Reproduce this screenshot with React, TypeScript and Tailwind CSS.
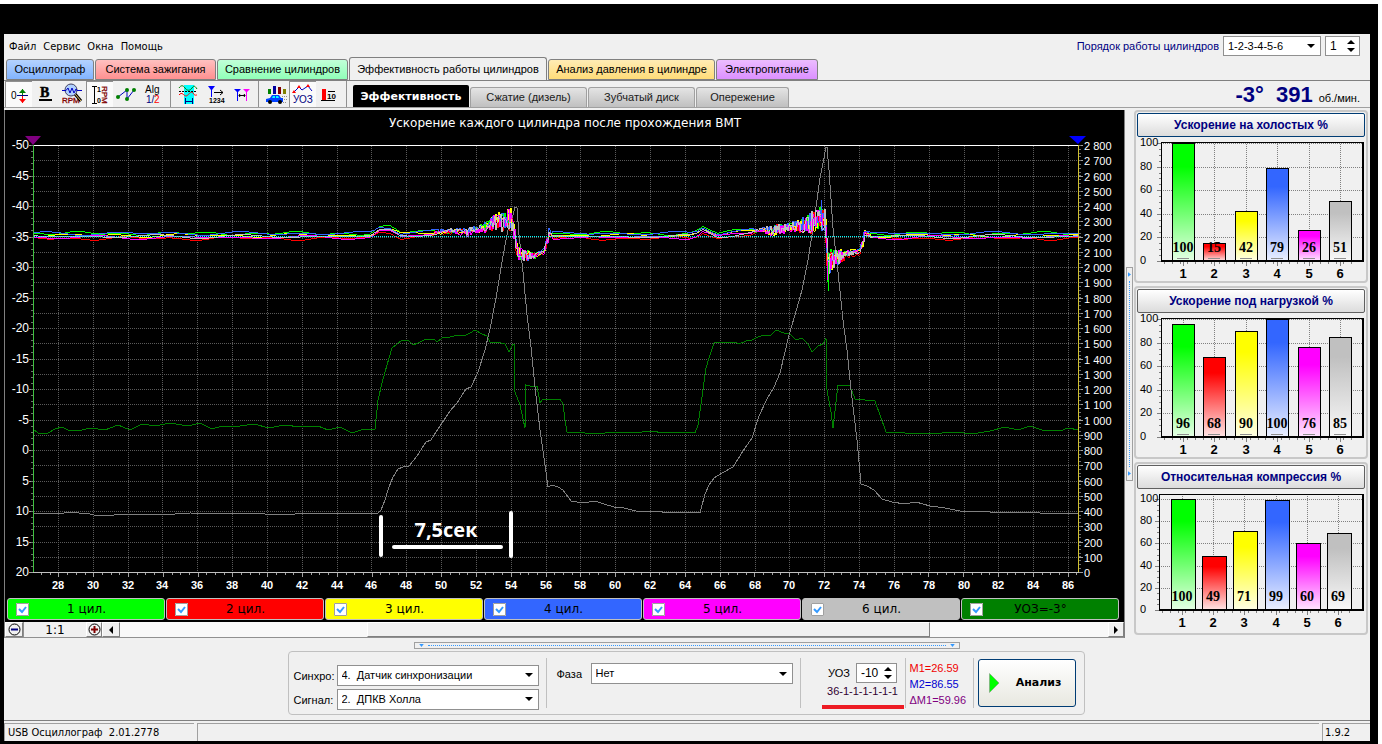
import React from "react";

type Point = [number, number];

// Plot rectangle of the main chart, in the units of its viewBox
const PLOT = { left: 33, right: 1079, top: 145, bottom: 572 };

const CYLINDERS = [
  { name: "1 цил.", color: "#00ff00" },
  { name: "2 цил.", color: "#ff0000" },
  { name: "3 цил.", color: "#ffff00" },
  { name: "4 цил.", color: "#3366ff" },
  { name: "5 цил.", color: "#ff00ff" },
  { name: "6 цил.", color: "#c0c0c0" },
];

const RPM_POINTS: Point[] = [
  [33, 513], [60, 514], [68, 512], [90, 514], [98, 516], [130, 514], [160, 515], [190, 513], [225, 514],
  [250, 513], [280, 515], [310, 513], [340, 514], [360, 513], [378, 513], [381, 510], [385, 500], [389, 487],
  [393, 477], [398, 469], [403, 467], [409, 466], [417, 456], [426, 442], [431, 440], [436, 432], [450, 411],
  [457, 403], [466, 389], [471, 387], [478, 372], [485, 350], [490, 329], [496, 298], [501, 268], [505, 245],
  [509, 225], [513, 215], [515, 207], [517, 208], [519, 235], [523, 272], [527, 315], [531, 347], [535, 387],
  [540, 430], [545, 465], [548, 487], [552, 485], [558, 487], [563, 490], [571, 501], [583, 503], [595, 501],
  [604, 504], [614, 507], [624, 508], [640, 512], [655, 511], [670, 513], [685, 512], [700, 513], [705, 494],
  [709, 485], [714, 478], [722, 473], [733, 467], [743, 451], [752, 438], [759, 416], [767, 399], [774, 387],
  [780, 373], [789, 335], [797, 308], [802, 290], [808, 260], [812, 235], [817, 200], [820, 178], [824, 158],
  [826, 147], [827, 147], [829, 170], [833, 228], [838, 272], [843, 320], [847, 350], [851, 390], [857, 440],
  [861, 484], [867, 486], [874, 490], [882, 499], [892, 502], [905, 504], [916, 502], [930, 506], [945, 508],
  [960, 511], [980, 511], [1000, 513], [1030, 512], [1050, 514], [1079, 513],
];

const ANGLE_POINTS: Point[] = [
  [33, 429], [38, 433], [48, 433], [55, 429], [62, 427], [70, 431], [82, 430], [90, 428], [105, 430], [118, 425],
  [130, 430], [142, 424], [155, 426], [170, 423], [188, 426], [200, 423], [212, 429], [222, 426], [240, 426],
  [255, 424], [268, 428], [285, 425], [300, 427], [318, 426], [328, 430], [340, 427], [352, 433], [364, 429],
  [375, 429], [378, 400], [382, 383], [387, 365], [392, 348], [402, 340], [408, 340], [413, 345], [418, 343],
  [424, 340], [434, 339], [437, 342], [442, 338], [450, 337], [458, 335], [464, 336], [470, 333], [475, 330],
  [482, 334], [487, 336], [490, 342], [497, 342], [505, 344], [509, 352], [513, 344], [514, 344], [515, 392],
  [520, 405], [525, 428], [526, 385], [534, 387], [537, 386], [540, 403], [543, 399], [560, 399], [563, 404],
  [565, 420], [567, 432], [585, 433], [605, 433], [620, 432], [635, 433], [650, 431], [665, 433], [680, 432],
  [695, 433], [698, 425], [702, 397], [706, 368], [710, 355], [714, 343], [722, 342], [735, 342], [739, 344],
  [746, 341], [752, 340], [758, 337], [764, 335], [770, 336], [776, 330], [784, 333], [790, 334], [796, 340],
  [802, 338], [808, 344], [812, 352], [818, 346], [823, 344], [826, 338], [827, 390], [831, 412], [833, 428],
  [838, 385], [850, 386], [855, 399], [875, 401], [880, 415], [886, 432], [905, 433], [930, 434], [955, 432],
  [972, 434], [990, 431], [1005, 427], [1018, 430], [1030, 426], [1042, 430], [1060, 431], [1068, 428], [1079, 430],
];

// [x, level, spread] of the cylinder bundle
const BUNDLE: [number, number, number][] = [
  [33, 235, 1], [370, 235, 1], [374, 233, 1], [380, 229, 1], [390, 229, 1], [400, 234, 1], [420, 233, 1],
  [450, 231, 2], [464, 231, 3], [467, 234, 4], [470, 231, 3], [485, 228, 4], [492, 222, 7], [500, 221, 9],
  [511, 219, 10], [515, 235, 9], [518, 254, 9], [524, 256, 6], [536, 255, 3], [544, 251, 1], [547, 242, 5],
  [549, 233, 3], [553, 235, 1], [690, 235, 1], [697, 233, 1], [703, 229, 1], [718, 235, 1], [740, 232, 1],
  [765, 229, 2], [772, 231, 5], [790, 227, 4], [805, 225, 8], [812, 221, 11], [825, 219, 12], [826, 228, 16],
  [828, 268, 18], [830, 262, 11], [838, 257, 8], [845, 254, 4], [860, 251, 1], [863, 242, 6], [865, 232, 4],
  [868, 235, 2], [872, 235, 1], [1079, 235, 1],
];

const noise = (x: number, seed: number) => {
  const v = Math.sin(x * 12.9898 + seed * 78.233) * 43758.5453;
  return (v - Math.floor(v)) * 2 - 1;
};

const traceFor = (index: number) => {
  const shift = [-2, 3, 0, -2, 2, 1][index];
  const points: Point[] = [];
  for (let x = PLOT.left; x <= PLOT.right; x += 1) {
    const at = Math.max(1, BUNDLE.findIndex((p) => p[0] >= x));
    const a = BUNDLE[at - 1];
    const b = BUNDLE[at];
    const k = (x - a[0]) / (b[0] - a[0]);
    const spread = a[2] + (b[2] - a[2]) * k;
    const level = a[1] + (b[1] - a[1]) * k;
    const calm = spread < 1.5;
    const drift = Math.sin(x / (7 + index) + index * 2) + Math.sin(x / 17 + index * 3);
    points.push([x, Math.round(level + drift + (calm ? shift : shift / 3 + noise(x, index + 1) * spread))]);
  }
  return points;
};

const toPath = (points: Point[]) => points.map((p) => p.join(",")).join(" ");

const range = (n: number) => Array.from({ length: n }, (_, i) => i);

const thousands = (n: number) => (n >= 1000 ? `${Math.floor(n / 1000)} ${String(n % 1000).padStart(3, "0")}` : String(n));

const MainChart: React.FC = () => {
  const rowY = (i: number) => Math.round(PLOT.top + (i * (PLOT.bottom - PLOT.top)) / 28);
  const colX = (i: number) => Math.round(58 + i * 34.83);
  return (
    <svg viewBox="5 110 1119 487" className="block h-auto w-full" role="img" aria-label="Ускорение каждого цилиндра">
      <text x="565" y="127" textAnchor="middle" fill="#fff" className="font-['DejaVu_Sans'] text-[12px]">
        Ускорение каждого цилиндра после прохождения ВМТ
      </text>
      <g shapeRendering="crispEdges" fill="none">
        {range(27).map((i) => (
          <path key={i} d={`M34 ${rowY(i + 1)}.5H1078`} stroke="#5a5a5a" strokeDasharray="1 1" />
        ))}
        {range(30).map((i) => (
          <path key={i} d={`M${colX(i)}.5 146V572`} stroke="#5a5a5a" strokeDasharray="1 1" />
        ))}
        {range(15).map((i) => (
          <path key={i} d={`M29 ${rowY(i * 2)}.5h4`} stroke="#a0a0a0" />
        ))}
        {range(70).map((i) => (
          <path key={i} d={`M31 ${Math.round(145 + i * 6.1)}.5h2`} stroke="#707070" />
        ))}
        {range(29).map((i) => (
          <path key={i} d={`M1079 ${rowY(i)}.5h4`} stroke="#a0a0a0" />
        ))}
        {range(112).map((i) => (
          <path key={i} d={`M1079 ${Math.round(145 + i * 3.81)}.5h2`} stroke="#707070" />
        ))}
        {range(120).map((i) => (
          <path key={i} d={`M${Math.round(41 + i * 8.7)}.5 573v${i % 4 === 2 ? 4 : 2}`} stroke="#a0a0a0" />
        ))}
        <path d="M33 145.5H1079" stroke="#fff" />
        <path d="M33 572.5H1079" stroke="#c0c0c0" />
        <polyline points={toPath(ANGLE_POINTS)} stroke="#008000" />
        <polyline points={toPath(RPM_POINTS)} stroke="#808080" />
        {CYLINDERS.map((c, i) => (
          <polyline key={c.name} points={toPath(traceFor(i))} stroke={c.color} />
        ))}
        <path d="M821.5 200V222" stroke="#3366ff" />
        <path d="M828.5 262V291" stroke="#00ff00" />
        <path d="M34 236.5H1079" stroke="#00ffff" strokeDasharray="1 1" />
        <path d="M33.5 145V572" stroke="#40c040" />
        <path d="M1078.5 145V572" stroke="#d0c030" />
      </g>
      <path d="M25 136H41L33 145Z" fill="#800080" />
      <path d="M1069 136H1086L1078 144Z" fill="#0000ff" />
      <g fill="#fff" className="font-['Liberation_Sans'] text-[12px]">
        {range(15).map((i) => (
          <text key={i} x="29" y={rowY(i * 2) + 4} textAnchor="end">{i * 5 - 50}</text>
        ))}
      </g>
      <g fill="#fff" className="font-['Liberation_Sans'] text-[11px]">
        {range(29).map((i) => (
          <text key={i} x="1084" y={rowY(i) + 5}>{thousands(2800 - i * 100)}</text>
        ))}
      </g>
      <g fill="#fff" textAnchor="middle" className="font-['Liberation_Sans'] text-[11px] font-bold">
        {range(30).map((i) => (
          <text key={i} x={colX(i)} y="589">{28 + i * 2}</text>
        ))}
      </g>
      <g stroke="#fff" strokeLinecap="round" strokeWidth="4">
        <path d="M381 517V555" />
        <path d="M511 513V556" />
        <path d="M394 547H501" />
      </g>
      <text x="446" y="537" textAnchor="middle" fill="#fff" className="font-['Open_Sans'] text-[20px] font-bold">7,5сек</text>
    </svg>
  );
};

type BarChartProps = {
  title: string;
  values: number[];
  headroom?: boolean;
  focused?: boolean;
};

const BarChart: React.FC<BarChartProps> = ({ title, values, headroom, focused }) => {
  const left = headroom ? 23 : 25;
  const top = 5;
  const bottom = headroom ? 121 : 124;
  const zeroToFull = headroom ? 111 : 118;
  const barWidth = headroom ? 25 : 23;
  const pitch = headroom ? 31.2 : 31.4;
  const y = (v: number) => Math.round(bottom - (v * zeroToFull) / 100);
  const centre = (i: number) => Math.round((headroom ? 46 : 47) + i * pitch);
  return (
    <section className="rounded-[4px] border-2 border-[#c8c8c8] pt-px">
      <button
        className={`mx-px flex h-6 w-[calc(100%-2px)] items-center justify-center rounded-[2px] border bg-linear-to-b from-white to-[#dcdcdc] text-xs font-bold text-[#000080] ${
          focused ? "border-[#003c74]" : "border-[#606060]"
        }`}
      >
        {title}
      </button>
      <svg viewBox="0 0 230 144" className="block h-auto w-full" role="img" aria-label={title}>
        <defs>
          {CYLINDERS.map((c, i) => (
            <linearGradient key={i} id={`bar-${title.length}-${i}`} x1="0" y1="0" x2="0" y2="1">
              <stop offset="0" stopColor={c.color} />
              <stop offset="0.2" stopColor={c.color} />
              <stop offset="1" stopColor={c.color} stopOpacity="0.1" />
            </linearGradient>
          ))}
        </defs>
        <g shapeRendering="crispEdges" fill="none" stroke="#808080">
          {range(5).map((i) => (
            <path key={i} d={`M${left} ${y(i * 20 + 20)}.5H226`} strokeDasharray="1 1" />
          ))}
          {values.map((_, i) => (
            <path key={i} d={`M${centre(i)}.5 ${top}V${bottom}`} strokeDasharray="1 1" />
          ))}
          {range(6).map((i) => (
            <path key={i} d={`M${left - 4} ${y(i * 20)}.5h4`} />
          ))}
          {range(21).map((i) => (
            <path key={i} d={`M${left - 2} ${y(i * 5)}.5h2`} />
          ))}
          {range(25).map((i) => (
            <path key={i} d={`M${Math.round(left + 3 + i * 7.8)}.5 ${bottom + 1}v2`} />
          ))}
          {values.map((_, i) => (
            <path key={i} d={`M${centre(i)}.5 ${bottom}v5`} />
          ))}
        </g>
        <g shapeRendering="crispEdges" stroke="#000">
          {values.map((v, i) => (
            <g key={i}>
              <rect x={centre(i) - 11} y={y(v)} width={barWidth - 1} height={bottom - y(v)} fill="#fff" />
              <rect
                x={centre(i) - 11}
                y={y(v)}
                width={barWidth - 1}
                height={bottom - y(v)}
                fill={`url(#bar-${title.length}-${i})`}
              />
              {!headroom && <path d={`M${centre(i) - 6} ${bottom - 3}.5h12`} stroke="#909090" />}
            </g>
          ))}
          <path d={`M${left}.5 ${top}V${bottom}M${left} ${top}.5H228`} />
          <path d={`M${left} ${bottom}H228M227 ${top}V${bottom + 1}`} strokeWidth="2" />
        </g>
        <g textAnchor="middle" className="font-['Liberation_Serif'] text-[14px] font-bold">
          {values.map((v, i) => (
            <text key={i} x={centre(i)} y={bottom - 9}>{v}</text>
          ))}
        </g>
        <g className="font-['Liberation_Sans'] text-[11px]">
          {range(6).map((i) => (
            <text key={i} x="4" y={y(i * 20) + 3}>{i * 20}</text>
          ))}
        </g>
        <g textAnchor="middle" className="font-['Liberation_Sans'] text-[13px] font-bold">
          {values.map((_, i) => (
            <text key={i} x={centre(i)} y={bottom + 17}>{i + 1}</text>
          ))}
        </g>
      </svg>
    </section>
  );
};

const TABS = [
  { name: "Осциллограф", style: "w-[88px] bg-linear-to-b from-[#b4d2ff] to-[#82b4ff]" },
  { name: "Система зажигания", style: "w-[121px] bg-linear-to-b from-[#ffc0c0] to-[#ff9090]" },
  { name: "Сравнение цилиндров", style: "w-[131px] bg-linear-to-b from-[#c0ffd8] to-[#90ffb8]" },
  { name: "Эффективность работы цилиндров", style: "w-[198px] h-[23px] border-b-0 bg-[#f0f0f0]" },
  { name: "Анализ давления в цилиндре", style: "w-[167px] bg-linear-to-b from-[#ffecb4] to-[#ffdc78]" },
  { name: "Электропитание", style: "w-[102px] bg-linear-to-b from-[#ecbcff] to-[#dc90ff]" },
];

const TOOL_GROUPS: { label: string; pressed?: boolean; art: React.ReactNode }[][] = [
  [
    {
      label: "Ноль",
      pressed: true,
      art: (
        <>
          <text x="5" y="16" className="text-[10px]">0</text>
          <path d="M11 12.5H22" stroke="#000080" />
          <path d="M16.5 13V20" stroke="#f00" />
          <path d="M16.5 6V12" stroke="#008000" />
          <path d="M13 10L16.5 6L20 10Z" fill="#008000" />
          <path d="M13 16L16.5 20L20 16Z" fill="#f00" />
        </>
      ),
    },
    {
      label: "Жирный",
      art: (
        <>
          <text x="7" y="14" stroke="#000" strokeWidth="0.5" className="font-['Liberation_Serif'] text-[14px] font-bold">B</text>
          <path d="M6 17H19" stroke="#000" strokeWidth="2" />
        </>
      ),
    },
    {
      label: "Обороты",
      art: (
        <>
          <text x="2" y="20" fill="#800000" stroke="#800000" strokeWidth="0.3" className="text-[8px]">RPM</text>
          <path d="M15 11L21 18" stroke="#000" strokeWidth="3" />
          <path d="M15 11L21 18" stroke="#e8c060" />
          <circle cx="11" cy="7" r="6" fill="#b0d0ff" stroke="#404060" />
          <path d="M2 7.5H6L8 5L10 10L12 5L14 10L16 6L17 7.5H22" fill="none" stroke="#0000c0" />
        </>
      ),
    },
    {
      label: "Шкала RPM",
      pressed: true,
      art: (
        <>
          <path d="M5 3.5H10M7.5 3V20M5 20.5H10" fill="none" stroke="#000" />
          <text x="10" y="9" className="text-[7px] font-bold">1</text>
          <text x="10" y="20" className="text-[7px] font-bold">0</text>
          <text transform="translate(15 3) rotate(90)" fill="#800000" stroke="#800000" strokeWidth="0.3" className="text-[8px]">RPM</text>
        </>
      ),
    },
    {
      label: "Точки",
      art: (
        <>
          <path d="M4 14L13 7V16L20 7" fill="none" stroke="#0000c0" />
          <g fill="#008000">
            <circle cx="4" cy="14" r="2" />
            <circle cx="13" cy="7" r="2" />
            <circle cx="13" cy="16" r="2" />
            <circle cx="20" cy="7" r="2" />
          </g>
        </>
      ),
    },
    {
      label: "Алгоритм",
      art: (
        <>
          <text x="4" y="10" className="text-[10px]">Alg</text>
          <text x="5" y="20" fill="#000080" className="text-[10px]">1/</text>
          <text x="13" y="20" fill="#f00" className="text-[10px]">2</text>
        </>
      ),
    },
  ],
  [
    {
      label: "Диапазон",
      art: (
        <>
          <path d="M9 2H19V21H9Z" fill="#0ff" />
          <path d="M4 5C6 2 8 2 10 5S15 8 17 5S20 3 22 6" fill="none" stroke="#008000" />
          <path d="M4 8.5H22" stroke="#000" strokeDasharray="2 1" />
          <path d="M4 12C7 8 9 13 11 13S16 7 18 10S20 12 22 12" fill="none" stroke="#f00" />
          <path d="M10.5 15V21M17.5 15V21M11 18.5H17" stroke="#000080" />
        </>
      ),
    },
    {
      label: "Метка 1234",
      art: (
        <>
          <path d="M6 3H13L10 7V14H9V7Z" fill="#00f" />
          <path d="M12 9.5H21M18 7L21 9.5L18 12" fill="none" stroke="#000" />
          <text x="7" y="20" className="text-[7px] font-bold">1234</text>
        </>
      ),
    },
    {
      label: "Между метками",
      art: (
        <>
          <path d="M5 6H12L9 9V18H8V9Z" fill="#00f" />
          <path d="M14 6H21L18 9V18H17V9Z" fill="#f0f" />
          <path d="M10 12.5H16M11 11L10 12.5L11 14M15 11L16 12.5L15 14" fill="none" stroke="#000" />
        </>
      ),
    },
  ],
  [
    {
      label: "Автомобиль",
      art: (
        <>
          <path d="M5 6H8V11H5Z" fill="#008000" />
          <path d="M10 3H13V11H10Z" fill="#0000a0" />
          <path d="M15 4H18V11H15Z" fill="#800000" />
          <path d="M20 6H23V11H20Z" fill="#808000" />
          <path d="M3 16L7 15L9 12H16L18 15H20V19H3Z" fill="#0040ff" />
          <path d="M9 15L10 13H12V15ZM13 13H15L16 15H13Z" fill="#0ff" />
          <circle cx="7" cy="19" r="2" />
          <circle cx="17" cy="19" r="2" />
          <path d="M19 13.5H24M21 16.5H25M20 19.5H24" stroke="#909090" strokeDasharray="1 1" />
        </>
      ),
    },
    {
      label: "УОЗ",
      pressed: true,
      art: (
        <>
          <path d="M4 9L9 4L12 7L18 3L22 8" fill="none" stroke="#0000c0" />
          <g fill="#f00">
            <path d="M2 10L4 7L6 10ZM7 5L9 2L11 5ZM16 4L18 1L20 4Z" />
          </g>
          <text x="3" y="20" fill="#000080" className="text-[10px]">УОЗ</text>
        </>
      ),
    },
    {
      label: "Гистограмма 10",
      art: (
        <>
          <path d="M5 6H9V17H5Z" fill="#f00" />
          <path d="M4 17.5H18M11 8.5H18" stroke="#000" />
          <text x="10" y="16" className="text-[8px] font-bold">10</text>
        </>
      ),
    },
  ],
];

const Toolbar: React.FC = () => (
  <div className="flex h-[26px] items-stretch pl-px">
    {TOOL_GROUPS.map((group, g) => (
      <div key={g} className="mr-[3px] flex border-r border-[#909090] pr-[3px]">
        {group.map((tool) => (
          <button
            key={tool.label}
            aria-label={tool.label}
            className={`w-[27px] ${tool.pressed ? "border-t border-l border-[#909090] bg-[#fafafa]" : "pt-px pl-px"}`}
          >
            <svg viewBox="0 0 26 24" width="26" height="24" className="font-['Liberation_Sans']">
              {tool.art}
            </svg>
          </button>
        ))}
      </div>
    ))}
  </div>
);

type ComboProps = { id: string; value: string; className: string };

const Combo: React.FC<ComboProps> = ({ id, value, className }) => (
  <div className={`relative ${className}`}>
    <select id={id} defaultValue={value} className="block h-full w-full appearance-none border border-[#909090] bg-white pl-1 text-[11px]">
      <option>{value}</option>
    </select>
    <svg viewBox="0 0 8 4" width="8" height="4" className="pointer-events-none absolute top-1/2 right-1.5 -translate-y-1/2">
      <path d="M0 0H8L4 4Z" />
    </svg>
  </div>
);

type SpinProps = { id: string; label: string; value: string; className: string };

const Spin: React.FC<SpinProps> = ({ id, label, value, className }) => (
  <div className={`flex h-5 items-center border border-[#909090] bg-white ${className}`}>
    <input id={id} aria-label={label} defaultValue={value} className="w-full min-w-0 pl-1 text-xs" />
    <div className="flex w-4 shrink-0 flex-col items-center gap-1">
      <button aria-label="Больше">
        <svg viewBox="0 0 8 4" width="8" height="4" className="block"><path d="M0 4H8L4 0Z" /></svg>
      </button>
      <button aria-label="Меньше">
        <svg viewBox="0 0 8 4" width="8" height="4" className="block"><path d="M0 0H8L4 4Z" /></svg>
      </button>
    </div>
  </div>
);

const Legend: React.FC = () => (
  <div className="flex gap-px bg-black px-0.5 pt-px pb-0.5">
    {[...CYLINDERS, { name: "УОЗ=-3°", color: "#008000" }].map((c) => (
      <label
        key={c.name}
        style={{ backgroundColor: c.color }}
        className="flex h-[22px] flex-1 items-center rounded-[3px] border border-[#c0c0c0] pl-2 font-['DejaVu_Sans'] text-[12px]"
      >
        <input type="checkbox" defaultChecked className="sr-only" />
        <svg viewBox="0 0 13 13" width="13" height="13" className="shrink-0 bg-white">
          <path d="M0.5 0.5H12.5V12.5H0.5Z" fill="none" stroke="#a0a0a0" />
          <path d="M3 6L6 9L10 4" fill="none" stroke="#3399ff" strokeWidth="2" />
        </svg>
        <span className="grow pr-5 text-center">{c.name}</span>
      </label>
    ))}
    <div className="w-[2px]" />
  </div>
);

const raised = "border border-t-white border-l-white border-r-[#808080] border-b-[#808080] bg-[#f0f0f0]";

const ZoomAndScroll: React.FC = () => (
  <div className="flex h-4 border-b border-[#909090]">
    <button aria-label="Уменьшить" className={`flex w-[18px] items-center justify-center ${raised}`}>
      <svg viewBox="0 0 13 13" width="13" height="13" className="shrink-0">
        <circle cx="6.5" cy="6.5" r="5.5" fill="none" stroke="#000" />
        <path d="M3 6.5H10" stroke="#000080" strokeWidth="2" />
      </svg>
    </button>
    <div className="w-[63px] border-l border-[#909090] bg-[#f0f0f0] text-center font-['DejaVu_Sans'] text-xs leading-4">1:1</div>
    <button aria-label="Увеличить" className={`flex w-4 items-center justify-center ${raised}`}>
      <svg viewBox="0 0 13 13" width="13" height="13" className="shrink-0">
        <circle cx="6.5" cy="6.5" r="5.5" fill="none" stroke="#000" />
        <path d="M3 6.5H10M6.5 3V10" stroke="#800000" strokeWidth="2" />
      </svg>
    </button>
    <button aria-label="Влево" className={`flex w-[18px] items-center justify-center ${raised}`}>
      <svg viewBox="0 0 4 8" width="4" height="8"><path d="M4 0V8L0 4Z" /></svg>
    </button>
    <div className="flex grow bg-[#f8f8f8]">
      <div className="w-1/4" />
      <div className={`w-[57%] ${raised}`} />
    </div>
    <button aria-label="Вправо" className={`flex w-4 items-center justify-center ${raised}`}>
      <svg viewBox="0 0 4 8" width="4" height="8"><path d="M0 0V8L4 4Z" /></svg>
    </button>
  </div>
);

const ControlPanel: React.FC = () => (
  <div className="mr-0.5 flex h-16 w-[797px] items-stretch rounded-[4px] border border-[#c0c0c0] py-1.5 pr-2 pl-[5px] text-[11px]">
    <div className="grid w-[245px] grid-cols-[43px_202px] content-center gap-y-[3px] pt-2">
      <label htmlFor="sync" className="self-center pt-0.5">Синхро:</label>
      <Combo id="sync" value={"4.\u00a0\u00a0Датчик синхронизации"} className="h-[21px]" />
      <label htmlFor="signal" className="self-center pt-0.5">Сигнал:</label>
      <Combo id="signal" value={"2.\u00a0\u00a0ДПКВ Холла"} className="h-[21px]" />
    </div>
    <div className="ml-[7px] flex w-[255px] items-start border-x border-[#c0c0c0] pt-[5px] pl-2.5">
      <label htmlFor="phase" className="w-[34px] pt-[3px]">Фаза</label>
      <Combo id="phase" value="Нет" className="h-[21px] w-[202px]" />
    </div>
    <div className="flex w-[105px] flex-col items-center border-r border-[#c0c0c0] pt-[5px]">
      <div className="flex items-center gap-1.5 pl-5">
        <label htmlFor="angle">УОЗ</label>
        <Spin id="angle" label="УОЗ" value="-10" className="w-[41px]" />
      </div>
      <div className="ml-5 flex h-[31px] w-[82px] items-end justify-center border-b-4 border-[#ed1c24] pb-[5px] text-[#300030]">
        36-1-1-1-1-1-1
      </div>
    </div>
    <div className="flex w-[68px] flex-col border-r border-[#c0c0c0] pt-0.5 pl-1 leading-4">
      <span className="text-[#f00000]">M1=26.59</span>
      <span className="text-[#0000d0]">M2=86.55</span>
      <span className="whitespace-nowrap text-[#800080]">ΔM1=59.96</span>
    </div>
    <button className="my-px ml-1 flex grow items-center rounded-[3px] border border-[#003c74] bg-linear-to-b from-white to-[#e8e8e0] pl-2.5 font-bold">
      <svg viewBox="0 0 10 20" width="10" height="20">
        <path d="M0.5 0.5V19.5L10 10Z" fill="#00ff00" stroke="#808080" strokeWidth="0.5" />
      </svg>
      <span className="grow pl-1 text-center font-['DejaVu_Sans']">Анализ</span>
    </button>
  </div>
);

const App: React.FC = () => {
  return (
    <div className="min-h-screen border-t-4 border-r-4 border-white bg-black pt-[30px] pr-2 pb-1 pl-1 font-['Liberation_Sans',sans-serif] text-black">
      <div className="flex flex-col bg-[#f0f0f0]">
        <header className="flex h-6 items-center justify-between pr-2.5 pl-[5px]">
          <nav className="flex gap-[7px] pt-0.5 font-['DejaVu_Sans_Condensed'] text-[11px]">
            {["Файл", "Сервис", "Окна", "Помощь"].map((item) => (
              <button key={item}>{item}</button>
            ))}
          </nav>
          <div className="flex items-center gap-1">
            <label htmlFor="order" className="text-[11px] text-[#000080]">Порядок работы цилиндров</label>
            <Combo id="order" value="1-2-3-4-5-6" className="h-5 w-[98px]" />
            <Spin id="cylinder" label="Цилиндр" value="1" className="w-[35px]" />
          </div>
        </header>
        <div className="flex h-[23px] items-end gap-px border-b border-[#808080] pl-0.5">
          {TABS.map((tab) => (
            <button
              key={tab.name}
              className={`h-[21px] shrink-0 rounded-t-[3px] border border-[#808080] text-[11px] whitespace-nowrap ${tab.style}`}
            >
              {tab.name}
            </button>
          ))}
        </div>
        <div className="flex items-end border-b border-[#a0a0a0]">
          <Toolbar />
          <div className="flex items-end gap-px pl-[3px] text-[11px]">
            <button className="h-[22px] w-[116px] rounded-t-[2px] bg-black pt-0.5 font-['DejaVu_Sans'] text-[11px] font-bold text-white">
              Эффективность
            </button>
            {[
              ["Сжатие (дизель)", "w-[117px]"],
              ["Зубчатый диск", "w-[107px]"],
              ["Опережение", "w-[93px]"],
            ].map(([name, width]) => (
              <button
                key={name}
                className={`h-5 rounded-t-[3px] border border-b-0 border-[#a0a0a0] bg-linear-to-b from-[#e4e4e4] to-[#c0c0c0] text-[#202020] ${width}`}
              >
                {name}
              </button>
            ))}
          </div>
          <div className="ml-auto flex items-baseline pr-2.5 font-bold text-[#000080]">
            <span className="mr-3 text-[22px] leading-6">-3°</span>
            <span className="mr-1.5 text-[22px] leading-6">391</span>
            <span className="text-[11px] font-normal text-black">об./мин.</span>
          </div>
        </div>
        <main className="flex pt-0.5">
          <div className="min-w-0 grow border-l border-[#808080]">
            <div className="bg-black">
              <MainChart />
              <Legend />
            </div>
            <ZoomAndScroll />
          </div>
          <div className="flex w-[10px] shrink-0 items-center border-l border-[#808080] px-px">
            <div className="flex h-[214px] w-[7px] flex-col items-center border border-[#a0a0a0] py-1 text-[#3399ff]">
              <svg viewBox="0 0 4 6" width="3" height="5" fill="currentColor"><path d="M0 0V6L4 3Z" /></svg>
              <div className="my-1 w-px grow border-l border-dotted border-current" />
              <svg viewBox="0 0 4 6" width="3" height="5" fill="currentColor"><path d="M0 0V6L4 3Z" /></svg>
            </div>
          </div>
          <aside className="mr-0.5 flex w-[234px] shrink-0 flex-col gap-[3px]">
            <BarChart title="Ускорение на холостых %" values={[100, 15, 42, 79, 26, 51]} focused />
            <BarChart title="Ускорение под нагрузкой %" values={[96, 68, 90, 100, 76, 85]} />
            <BarChart title="Относительная компрессия %" values={[100, 49, 71, 99, 60, 69]} headroom />
          </aside>
        </main>
        <div className="flex flex-col items-center gap-0.5 border-b border-[#808080] pt-1 pb-[5px]">
          <div className="flex h-[7px] w-[546px] items-center border border-[#a0a0a0] px-1 text-[#3399ff]">
            <svg viewBox="0 0 6 4" width="5" height="3" fill="currentColor"><path d="M0 0H6L3 4Z" /></svg>
            <div className="mx-1 h-px grow border-t border-dotted border-current" />
            <svg viewBox="0 0 6 4" width="5" height="3" fill="currentColor"><path d="M0 0H6L3 4Z" /></svg>
          </div>
          <ControlPanel />
        </div>
        <footer className="mt-0.5 flex h-[18px] gap-[3px] font-['DejaVu_Sans_Condensed'] text-[11px] leading-[18px]">
          <span className="w-[190px] border-t border-l border-[#a0a0a0] pl-[3px] whitespace-pre">USB Осциллограф  2.01.2778</span>
          <span className="grow border-t border-l border-[#a0a0a0]" />
          <span className="w-12 border-t border-l border-[#a0a0a0] pl-0.5">1.9.2</span>
        </footer>
      </div>
    </div>
  );
};

export default App;
